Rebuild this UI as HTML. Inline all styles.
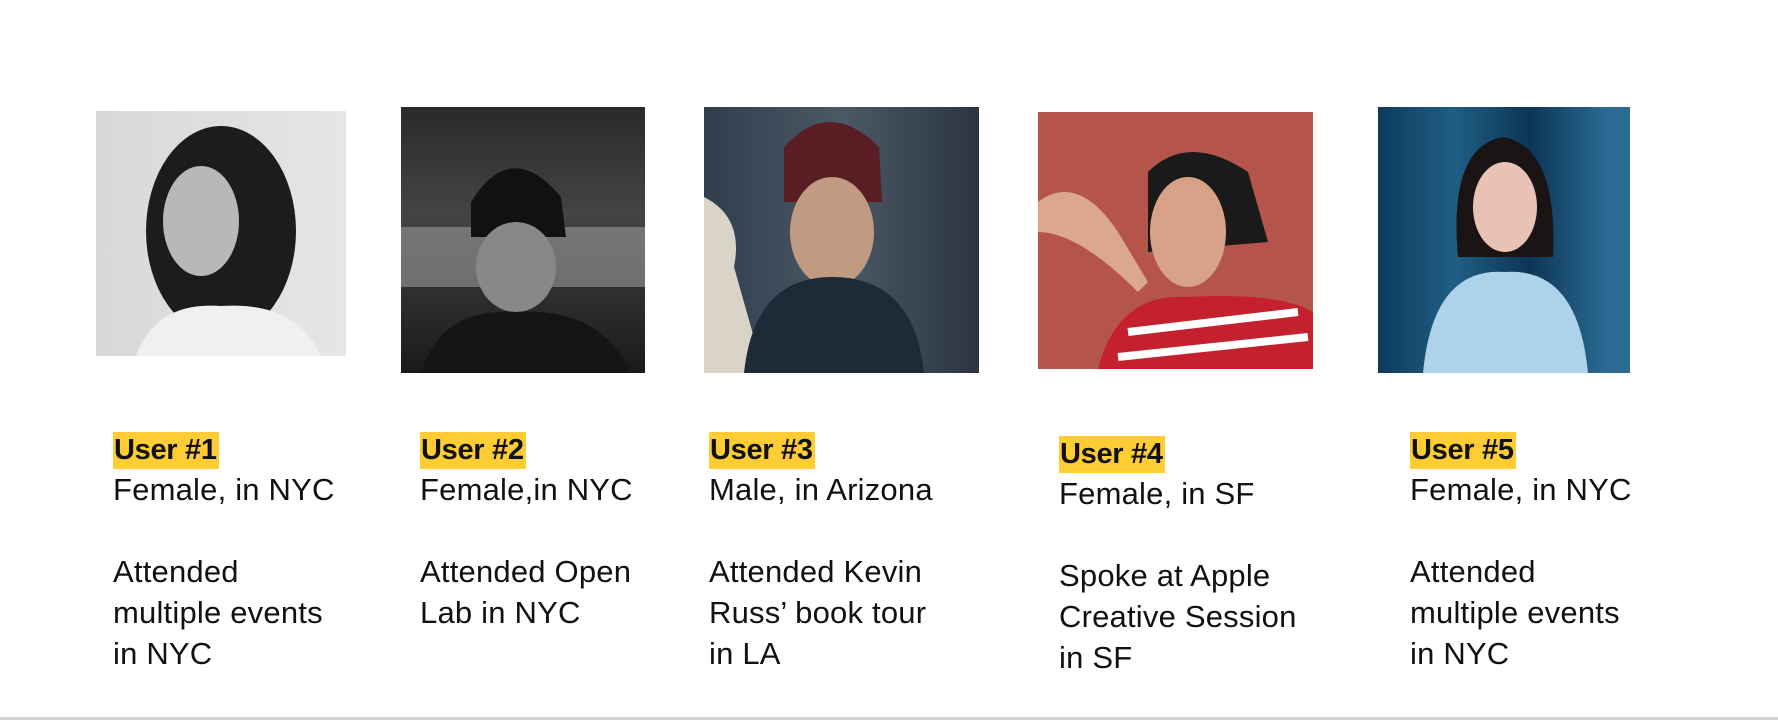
<!DOCTYPE html>
<html><head><meta charset="utf-8"><style>
body{margin:0;width:1778px;height:720px;background:#fff;position:relative;overflow:hidden;font-family:"Liberation Sans",sans-serif;color:#111}
.img{position:absolute;overflow:hidden}
.col{position:absolute;font-size:31px;line-height:41px;letter-spacing:0.2px}
.hl{background:#fecd33;font-weight:bold;padding:0 2px 0 1px;display:inline-block;line-height:37px;font-size:29px;letter-spacing:-0.3px}
.line{position:absolute;left:0;top:717px;width:1778px;height:3px;background:#d4d4d4}
</style></head><body>
<div class="img" style="left:96px;top:111px;width:250px;height:245px;background:linear-gradient(90deg,#d8d8d8,#e6e6e6)">
<svg width="250" height="245"><ellipse cx="125" cy="120" rx="75" ry="105" fill="#1c1c1c"/><ellipse cx="105" cy="110" rx="38" ry="55" fill="#b8b8b8"/><path d="M40 245 Q60 190 125 195 Q200 190 225 245Z" fill="#f0f0f0"/></svg></div>
<div class="img" style="left:401px;top:107px;width:244px;height:266px;background:linear-gradient(180deg,#2a2a2a,#444 40%,#1a1a1a)">
<svg width="244" height="266"><rect x="0" y="120" width="244" height="60" fill="#9a9a9a" opacity=".6"/><path d="M70 95 Q110 30 160 90 L165 130 L70 130Z" fill="#111"/><ellipse cx="115" cy="160" rx="40" ry="45" fill="#888"/><path d="M20 266 Q40 200 115 205 Q200 200 230 266Z" fill="#151515"/></svg></div>
<div class="img" style="left:704px;top:107px;width:275px;height:266px;background:linear-gradient(90deg,#2f3e4d,#4b5966 50%,#2a3540)">
<svg width="275" height="266"><path d="M0 90 Q40 110 30 160 L60 266 L0 266Z" fill="#d9d3c8"/><path d="M80 40 Q125 -10 175 40 L178 95 L80 95Z" fill="#5a1d24"/><ellipse cx="128" cy="125" rx="42" ry="55" fill="#c19a82"/><path d="M40 266 Q50 170 128 170 Q210 170 220 266Z" fill="#1f2a38"/></svg></div>
<div class="img" style="left:1038px;top:112px;width:275px;height:257px;background:#b5544a">
<svg width="275" height="257"><path d="M110 60 Q150 20 210 60 L230 130 L110 140Z" fill="#1a1a1a"/><ellipse cx="150" cy="120" rx="38" ry="55" fill="#d7a287"/><path d="M0 90 Q40 60 80 120 L110 170 L100 180 Q40 120 0 120Z" fill="#dba88e"/><path d="M60 257 Q80 180 150 185 Q240 180 275 200 L275 257Z" fill="#c4202d"/><path d="M90 220 L260 200 M80 245 L270 225" stroke="#fff" stroke-width="8"/></svg></div>
<div class="img" style="left:1378px;top:107px;width:252px;height:266px;background:linear-gradient(90deg,#0e3a5c,#1f5f86 30%,#0d3555 60%,#2a6a93 90%)">
<svg width="252" height="266"><path d="M80 150 Q70 40 125 30 Q180 40 175 150Z" fill="#1a1414"/><ellipse cx="127" cy="100" rx="32" ry="45" fill="#e8c3b5"/><path d="M45 266 Q55 160 127 165 Q200 160 210 266Z" fill="#aed2ea"/></svg></div>

<div class="col" style="left:113px;top:428px"><span class="hl">User #1</span><br>Female, in NYC<br><br>Attended<br>multiple events<br>in NYC</div>
<div class="col" style="left:420px;top:428px"><span class="hl">User #2</span><br>Female,in NYC<br><br>Attended Open<br>Lab in NYC</div>
<div class="col" style="left:709px;top:428px"><span class="hl">User #3</span><br>Male, in Arizona<br><br>Attended Kevin<br>Russ’ book tour<br>in LA</div>
<div class="col" style="left:1059px;top:432px"><span class="hl">User #4</span><br>Female, in SF<br><br>Spoke at Apple<br>Creative Session<br>in SF</div>
<div class="col" style="left:1410px;top:428px"><span class="hl">User #5</span><br>Female, in NYC<br><br>Attended<br>multiple events<br>in NYC</div>
<div class="line"></div>
</body></html>
